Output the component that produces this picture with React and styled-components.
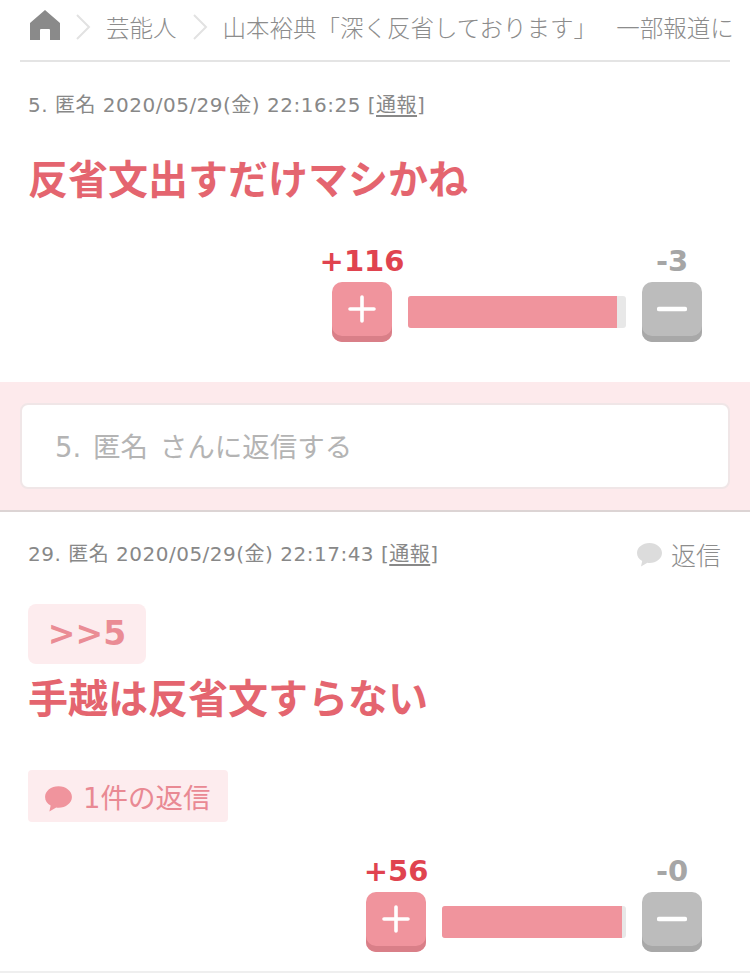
import React from "react"
import styled, { createGlobalStyle } from "styled-components"

const JP = `"Noto Sans CJK JP", "Noto Sans", sans-serif`
const MIXED = `"DejaVu Sans", "Noto Sans CJK JP", sans-serif`

const GlobalStyle = createGlobalStyle`
  html, body {
    margin: 0;
    padding: 0;
    background: #fff;
  }
  body {
    font-family: ${JP};
    overflow: hidden;
  }
`

const Page = styled.div`
  width: 750px;
  height: 973px;
  overflow: hidden;
`

const Breadcrumb = styled.nav`
  height: 62px;
  box-sizing: border-box;
  margin: 0 20px;
  border-bottom: 2px solid #e4e4e4;
  display: flex;
  align-items: flex-start;
  padding: 10px 0 0 10px;
  white-space: nowrap;
`

const Crumb = styled.span`
  font-size: 23.5px;
  line-height: 34px;
  font-weight: 300;
  color: #8c8c8c;
  word-spacing: 14px;
`

const Chevron = styled.svg`
  width: 16px;
  height: 26px;
  margin: 4px 15px 0 15px;
  flex: none;
`

const Comment = styled.article`
  height: ${(p) => p.$height}px;
  padding: 0 28px;
  box-sizing: border-box;
  display: flex;
  flex-direction: column;
`

const MetaRow = styled.div`
  display: flex;
  justify-content: space-between;
  align-items: center;
  height: 30px;
  margin-top: ${(p) => p.$top}px;
`

const Meta = styled.div`
  font-family: ${MIXED};
  font-size: 20px;
  line-height: 30px;
  color: #888;
  letter-spacing: 0.5px;

  u {
    text-underline-offset: 3px;
  }
`

const ReplyLink = styled.div`
  display: flex;
  align-items: center;
  font-size: 25px;
  line-height: 30px;
  font-weight: 300;
  color: #8c8c8c;
  margin-right: 1px;
`

const ReplyIcon = styled.svg`
  width: 27px;
  height: 25px;
  margin-right: 8px;
  flex: none;
`

const Quote = styled.div`
  align-self: flex-start;
  width: 118px;
  height: 60px;
  margin-top: ${(p) => p.$top}px;
  border-radius: 8px;
  background: #fdecee;
  color: #ea8c95;
  font-family: "DejaVu Sans", sans-serif;
  font-weight: 700;
  font-size: 33px;
  line-height: 60px;
  text-align: center;
`

const Body = styled.h2`
  margin: ${(p) => p.$top}px 0 0 0;
  font-size: 40px;
  line-height: 60px;
  font-weight: 700;
  color: #e4656f;
`

const RepliesChip = styled.div`
  align-self: flex-start;
  display: flex;
  align-items: center;
  height: 52px;
  width: 200px;
  box-sizing: border-box;
  margin-top: 44px;
  padding-left: 16px;
  border-radius: 4px;
  background: #fdecee;
  color: #e98993;
  font-family: ${MIXED};
  font-size: 27.5px;
`

const RepliesIcon = styled.svg`
  width: 29px;
  height: 27px;
  margin: 4px 10px 0 0;
  flex: none;
`

const VoteRow = styled.div`
  display: flex;
  justify-content: flex-end;
  align-items: flex-end;
  margin-top: ${(p) => p.$top}px;
  padding-right: 20px;
`

const VoteCol = styled.div`
  width: 60px;
  display: flex;
  flex-direction: column;
  align-items: center;
`

const Count = styled.div`
  height: 36px;
  font-family: "DejaVu Sans", sans-serif;
  font-weight: 700;
  font-size: 29px;
  line-height: 30px;
  white-space: nowrap;
  color: ${(p) => (p.$plus ? "#e0434f" : "#a6a6a6")};
`

const VoteButton = styled.div`
  width: 60px;
  height: 60px;
  box-sizing: border-box;
  padding-bottom: 6px;
  border-radius: 10px;
  display: flex;
  align-items: center;
  justify-content: center;
  background: ${(p) => (p.$plus ? "#f0949d" : "#bcbcbc")};
  box-shadow: inset 0 -6px 0 ${(p) => (p.$plus ? "#d97f88" : "#a8a8a8")};
`

const Bar = styled.div`
  width: ${(p) => p.$width}px;
  height: 32px;
  margin: 0 16px 14px;
  border-radius: 3px;
  overflow: hidden;
  background: #e8e8e8;
`

const BarFill = styled.div`
  height: 100%;
  background: #f0949d;
`

const ReplyBand = styled.section`
  height: 130px;
  box-sizing: border-box;
  padding: 21px 20px;
  background: #fdeaec;
  border-bottom: 2px solid #dcd4d4;
`

const ReplyInput = styled.div`
  height: 86px;
  box-sizing: border-box;
  padding-left: 33px;
  border: 2px solid #f0e6e7;
  border-radius: 8px;
  background: #fff;
  color: #b4b4b4;
  font-family: ${MIXED};
  font-size: 27.5px;
  line-height: 84px;
  word-spacing: 3px;
`

const Rule = styled.div`
  height: 2px;
  margin-top: -2px;
  background: #efefef;
`

const PlusIcon = () => (
  <svg width="30" height="30" viewBox="0 0 30 30">
    <path d="M15 3v24M3 15h24" stroke="#fff" strokeWidth="3.6" strokeLinecap="round" />
  </svg>
)

const MinusIcon = () => (
  <svg width="30" height="30" viewBox="0 0 30 30">
    <path d="M2 15h26" stroke="#fff" strokeWidth="4.4" strokeLinecap="round" />
  </svg>
)

const Votes = ({ plus, minus, barWidth, fill, top }) => (
  <VoteRow $top={top}>
    <VoteCol>
      <Count $plus>{plus}</Count>
      <VoteButton $plus>
        <PlusIcon />
      </VoteButton>
    </VoteCol>
    <Bar $width={barWidth}>
      <BarFill style={{ width: `${fill}%` }} />
    </Bar>
    <VoteCol>
      <Count>{minus}</Count>
      <VoteButton>
        <MinusIcon />
      </VoteButton>
    </VoteCol>
  </VoteRow>
)

const bubble = "M13.5 1C6.6 1 1 5.4 1 11c0 3.4 2 6.3 5.2 8.1L5 24.5l6.4-3.7c.7.1 1.4.2 2.1.2 6.9 0 12.5-4.5 12.5-10S20.4 1 13.5 1z"

const App = () => (
  <Page>
    <GlobalStyle />
    <Breadcrumb>
      <svg width="30" height="30" viewBox="0 0 30 30" style={{ flex: "none" }}>
        <path d="M15 0 L30 13 V30 H20 V20 Q20 19 19 19 H11 Q10 19 10 20 V30 H0 V13 Z" fill="#8a8a8a" />
      </svg>
      <Chevron viewBox="0 0 16 26">
        <path d="M2 1l12 12L2 25" fill="none" stroke="#e2e2e2" strokeWidth="2" />
      </Chevron>
      <Crumb>芸能人</Crumb>
      <Chevron viewBox="0 0 16 26">
        <path d="M2 1l12 12L2 25" fill="none" stroke="#e2e2e2" strokeWidth="2" />
      </Chevron>
      <Crumb>山本裕典「深く反省しております」 一部報道に</Crumb>
    </Breadcrumb>

    <Comment $height={320}>
      <MetaRow $top={28}>
        <Meta>
          5. 匿名 2020/05/29(金) 22:16:25 [<u>通報</u>]
        </Meta>
      </MetaRow>
      <Body $top={27}>反省文出すだけマシかね</Body>
      <Votes plus="+116" minus="-3" barWidth={218} fill={96} top={39} />
    </Comment>

    <ReplyBand>
      <ReplyInput>5. 匿名 さんに返信する</ReplyInput>
    </ReplyBand>

    <Comment $height={461}>
      <MetaRow $top={27}>
        <Meta>
          29. 匿名 2020/05/29(金) 22:17:43 [<u>通報</u>]
        </Meta>
        <ReplyLink>
          <ReplyIcon viewBox="0 0 27 25">
            <path d={bubble} fill="#dcdcdc" />
          </ReplyIcon>
          返信
        </ReplyLink>
      </MetaRow>
      <Quote $top={35}>&gt;&gt;5</Quote>
      <Body $top={2}>手越は反省文すらない</Body>
      <RepliesChip>
        <RepliesIcon viewBox="0 0 27 25">
          <path d={bubble} fill="#f0949d" />
        </RepliesIcon>
        1件の返信
      </RepliesChip>
      <Votes plus="+56" minus="-0" barWidth={184} fill={98} top={34} />
    </Comment>
    <Rule />
  </Page>
)

export default App
